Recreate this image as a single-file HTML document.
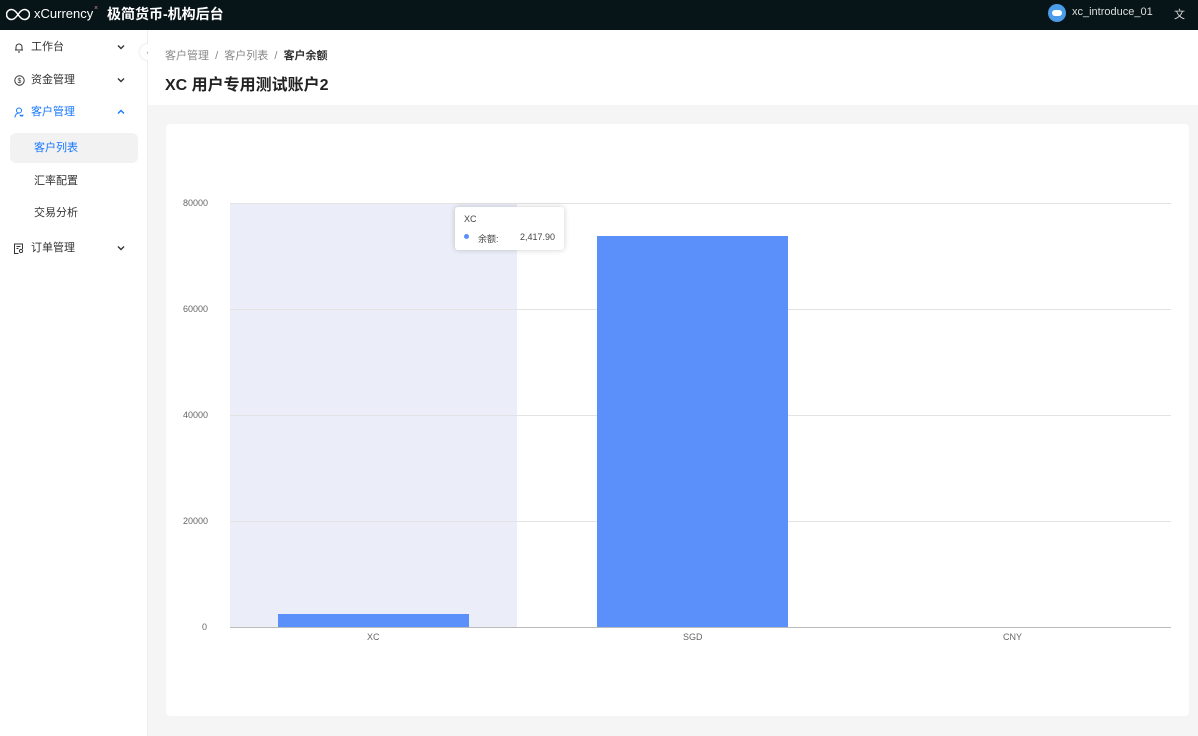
<!DOCTYPE html><html><head><meta charset="utf-8"><style>
*{margin:0;padding:0;box-sizing:border-box}
body{width:1198px;height:736px;overflow:hidden;font-family:"Liberation Sans","Noto Sans CJK SC",sans-serif;background:#f5f5f5;position:relative;color:#333}
.hdr{position:absolute;left:0;top:0;width:1198px;height:30px;background:#071418;color:#fff}
.side{position:absolute;left:0;top:30px;width:148px;height:706px;background:#fff;border-right:1px solid #eee}
.mi{position:absolute;left:0;width:148px;height:14px;font-size:11px;color:#333;line-height:14px}
.mi svg.ic{position:absolute;left:14px;top:2px}
.mi .t{position:absolute;left:31px;top:0}
.mi svg.ch{position:absolute;left:117px;top:4px}
.sub{position:absolute;left:34px;font-size:11px;color:#333;line-height:14px}
.top{position:absolute;left:148px;top:30px;width:1050px;height:75px;background:#fff}
.card{position:absolute;left:166px;top:124px;width:1023px;height:592px;background:#fff;border-radius:4px}
.ax{position:absolute;font-size:9px;color:#666}
.gl{position:absolute;left:230px;width:941px;height:1px;background:#e3e3e3}
</style></head><body>
<div class="hdr">
<svg style="position:absolute;left:6px;top:8px" width="24" height="13" viewBox="0 0 24 13"><path d="M12 6.5C9 2 7 1.5 5.5 1.5a5 5 0 0 0 0 10C7 11.5 9 11 12 6.5S17 1.5 18.5 1.5a5 5 0 0 1 0 10C17 11.5 15 11 12 6.5" fill="none" stroke="#fff" stroke-width="1.5"/></svg>
<span style="position:absolute;left:34px;top:6px;font-size:13px">xCurrency</span>
<span style="position:absolute;left:94px;top:5px;font-size:7px;color:#c8a">×</span>
<span style="position:absolute;left:107px;top:4px;font-size:14px;font-weight:bold">极简货币-机构后台</span>
<div style="position:absolute;left:1048px;top:4px;width:18px;height:18px;border-radius:50%;background:#4a9be8"><div style="margin:6px 4px;width:10px;height:6px;background:#fff;border-radius:3px"></div></div>
<span style="position:absolute;left:1072px;top:6px;font-size:11px;color:#ddd">xc_introduce_01</span>
<span style="position:absolute;left:1174px;top:6px;font-size:11px;color:#ddd">文</span>
</div>
<div class="side">
<div class="mi" style="top:10px"><svg class="ic" width="10" height="11" viewBox="0 0 10 11"><path d="M2 8V5a3 3 0 0 1 6 0v3h1H1zM4 10h2" fill="none" stroke="#333" stroke-width="1"/></svg><span class="t">工作台</span><svg class="ch" width="8" height="6" viewBox="0 0 8 6"><path d="M1 1.5l3 3 3-3" fill="none" stroke="#333" stroke-width="1.4"/></svg></div>
<div class="mi" style="top:43px"><svg class="ic" width="11" height="11" viewBox="0 0 11 11"><circle cx="5.5" cy="5.5" r="4.7" fill="none" stroke="#333"/><text x="5.5" y="8" font-size="7" text-anchor="middle" fill="#333">$</text></svg><span class="t">资金管理</span><svg class="ch" width="8" height="6" viewBox="0 0 8 6"><path d="M1 1.5l3 3 3-3" fill="none" stroke="#333" stroke-width="1.4"/></svg></div>
<div class="mi" style="top:75px;color:#1677ff"><svg class="ic" width="11" height="11" viewBox="0 0 11 11"><circle cx="5" cy="3.5" r="2.5" fill="none" stroke="#1677ff"/><path d="M1 10.5c0-3 2-4.5 4-4.5M7 8l1.5 1.5M6 7.5a1.5 1.5 0 1 0 3 0" fill="none" stroke="#1677ff"/></svg><span class="t">客户管理</span><svg class="ch" width="8" height="6" viewBox="0 0 8 6"><path d="M1 4.5l3-3 3 3" fill="none" stroke="#1677ff" stroke-width="1.4"/></svg></div>
<div style="position:absolute;left:10px;top:103px;width:128px;height:30px;background:#f2f2f2;border-radius:6px"></div>
<div class="sub" style="top:111px;color:#1677ff">客户列表</div>
<div class="sub" style="top:144px">汇率配置</div>
<div class="sub" style="top:176px">交易分析</div>
<div class="mi" style="top:211px"><svg class="ic" width="10" height="11" viewBox="0 0 10 11"><path d="M8.5 6V1h-8v9.5h4M2.5 3.5h4M2.5 5.5h2" fill="none" stroke="#333"/><circle cx="7" cy="8" r="1.6" fill="none" stroke="#333"/></svg><span class="t">订单管理</span><svg class="ch" width="8" height="6" viewBox="0 0 8 6"><path d="M1 1.5l3 3 3-3" fill="none" stroke="#333" stroke-width="1.4"/></svg></div>
<div style="position:absolute;left:140px;top:14px;width:16px;height:16px;border-radius:50%;background:#fff;box-shadow:0 0 3px #ddd;font-size:9px;color:#999;text-align:center;line-height:16px">‹</div>
</div>
<div class="top">
<div style="position:absolute;left:17px;top:17px;font-size:11px;color:#888">客户管理 &nbsp;/&nbsp; 客户列表 &nbsp;/&nbsp; <span style="color:#333;font-weight:bold">客户余额</span></div>
<div style="position:absolute;left:17px;top:41px;font-size:16px;font-weight:bold;color:#222">XC 用户专用测试账户2</div>
</div>
<div class="card"></div>
<div style="position:absolute;left:230px;top:203px;width:287px;height:424px;background:#ebeef8"></div>
<div class="gl" style="top:203px"></div><div class="gl" style="top:309px"></div><div class="gl" style="top:415px"></div><div class="gl" style="top:521px"></div>
<div class="gl" style="top:627px;background:#bbb"></div>
<div class="ax" style="left:183px;top:198px">80000</div>
<div class="ax" style="left:183px;top:304px">60000</div>
<div class="ax" style="left:183px;top:410px">40000</div>
<div class="ax" style="left:183px;top:516px">20000</div>
<div class="ax" style="left:202px;top:622px">0</div>
<div style="position:absolute;left:278px;top:614px;width:191px;height:13px;background:#5b8ff9"></div>
<div style="position:absolute;left:597px;top:236px;width:191px;height:391px;background:#5b8ff9"></div>
<div class="ax" style="left:367px;top:632px">XC</div>
<div class="ax" style="left:683px;top:632px">SGD</div>
<div class="ax" style="left:1003px;top:632px">CNY</div>
<div style="position:absolute;left:455px;top:207px;width:109px;height:43px;background:#fff;border-radius:3px;box-shadow:0 0 6px rgba(0,0,0,.2);font-size:9px;color:#444">
<div style="position:absolute;left:9px;top:7px">XC</div>
<div style="position:absolute;left:9px;top:27px;width:5px;height:5px;border-radius:50%;background:#5b8ff9"></div>
<div style="position:absolute;left:23px;top:25px">余额:</div>
<div style="position:absolute;right:9px;top:25px">2,417.90</div>
</div>
</body></html>
